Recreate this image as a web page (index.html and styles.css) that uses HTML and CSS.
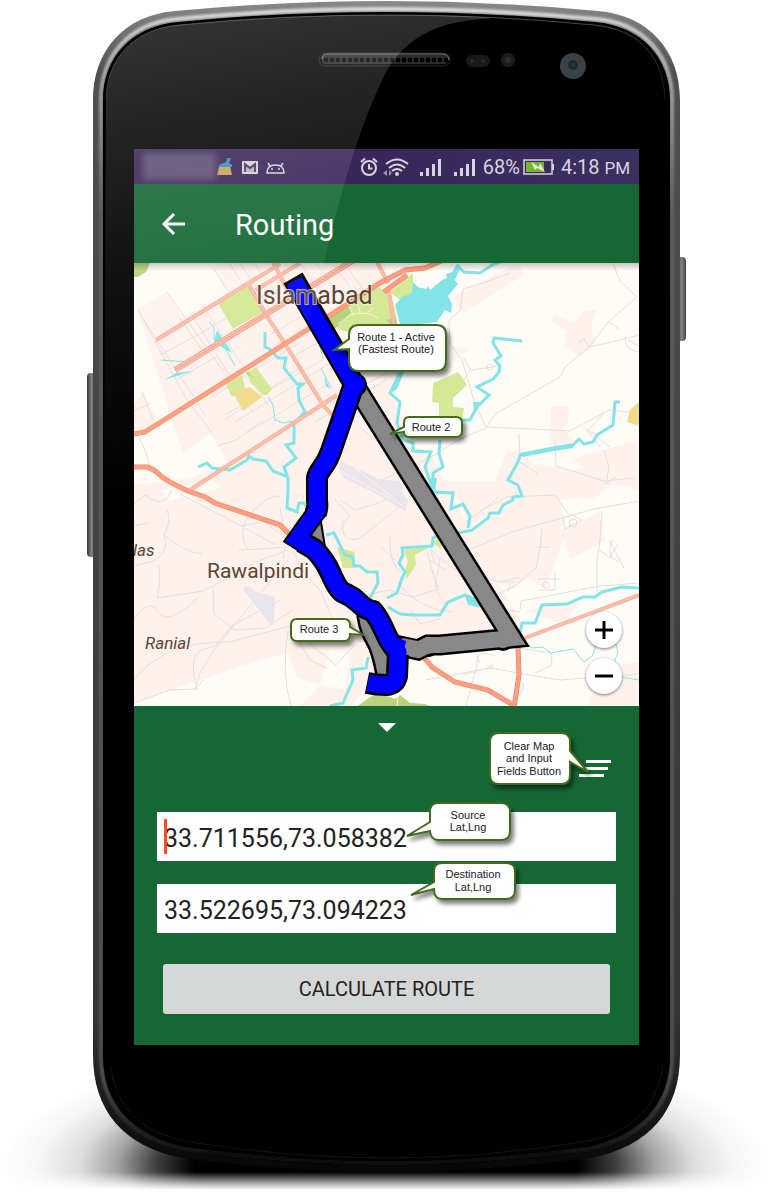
FILE: index.html
```html
<!DOCTYPE html>
<html lang="en">
<head>
<meta charset="utf-8">
<meta name="viewport" content="width=device-width, initial-scale=1">
<title>Routing</title>
<link rel="stylesheet" href="styles.css">
</head>
<body>
<main class="phone">
  <svg class="phone-frame" viewBox="0 0 771 1196" preserveAspectRatio="none" aria-hidden="true">
    <defs>
      <radialGradient id="ground">
        <stop offset="0" stop-color="#000"/><stop offset=".5" stop-color="#000"/>
        <stop offset=".6" stop-color="#000" stop-opacity=".75"/><stop offset=".7" stop-color="#000" stop-opacity=".36"/><stop offset=".8" stop-color="#000" stop-opacity=".13"/>
        <stop offset=".9" stop-color="#000" stop-opacity=".04"/><stop offset="1" stop-color="#000" stop-opacity="0"/>
      </radialGradient>
      <linearGradient id="fade" x1="0" y1="1172" x2="0" y2="1190" gradientUnits="userSpaceOnUse">
        <stop offset="0" stop-color="#fff"/><stop offset=".7" stop-color="#444"/><stop offset="1" stop-color="#000"/>
      </linearGradient>
      <mask id="floor" maskUnits="userSpaceOnUse" x="0" y="1000" width="771" height="196"><rect y="1000" width="771" height="196" fill="url(#fade)"/></mask>
      <linearGradient id="metal" x1="0" y1="0" x2="0" y2="1196" gradientUnits="userSpaceOnUse">
        <stop offset="0" stop-color="#8a8a8a"/><stop offset=".06" stop-color="#505050"/><stop offset=".85" stop-color="#343434"/><stop offset=".95" stop-color="#101010"/><stop offset="1" stop-color="#000"/>
      </linearGradient>
      <linearGradient id="shine" x1="0" y1="0" x2="0" y2="1196" gradientUnits="userSpaceOnUse">
        <stop offset="0" stop-color="#e2e2e2"/><stop offset=".06" stop-color="#aaa"/><stop offset=".18" stop-color="#5c5c5c"/><stop offset=".9" stop-color="#505050"/><stop offset=".96" stop-color="#161616"/><stop offset=".97" stop-color="#080808"/>
      </linearGradient>
      <linearGradient id="lip" x1="0" y1="0" x2="0" y2="110" gradientUnits="userSpaceOnUse">
        <stop offset="0" stop-color="#555"/><stop offset=".5" stop-color="#333"/><stop offset="1" stop-color="#111"/>
      </linearGradient>
      <linearGradient id="key"><stop offset="0" stop-color="#333"/><stop offset=".5" stop-color="#858585"/><stop offset="1" stop-color="#444"/></linearGradient>
      <filter id="soft"><feGaussianBlur stdDeviation="1"/></filter>
      <pattern id="holes" x="323" y="55" width="6" height="10" patternUnits="userSpaceOnUse"><rect width="6" height="10" fill="#2c2c2c"/><circle cx="3" cy="5" r="2.4" fill="#000"/></pattern>
    </defs>
    <ellipse cx="386" cy="1166" rx="384" ry="124" fill="url(#ground)" mask="url(#floor)"/>
    <rect x="87" y="373" width="9" height="184" rx="4" fill="url(#key)"/>
    <rect x="677" y="257" width="9" height="84" rx="4" fill="url(#key)"/>
    <path fill="url(#metal)" d="M93 100C93 50 125 15 175 11Q280 1 386 1T598 11C648 15 680 50 680 100V1055C680 1110 650 1147 590 1158Q480 1172 386 1172T183 1158C123 1147 93 1110 93 1055Z"/>
    <path fill="none" stroke="url(#shine)" stroke-width="4" filter="url(#soft)" d="M101 100C101 55 130 23 177 19Q280 9 386 9T596 19C643 23 672 55 672 100V1055C672 1105 644 1137 588 1149Q480 1163 386 1163T185 1149C129 1137 101 1105 101 1055Z"/>
    <path fill="#000" d="M103 100C103 57 132 26 178 22Q280 12 386 12T595 22C641 26 670 57 670 100V1055C670 1103 642 1135 587 1147Q480 1161 386 1161T186 1147C131 1135 103 1103 103 1055Z"/>
    <path fill="none" stroke="url(#lip)" d="M106 100C106 59 134 29 179 25Q280 15 386 15T594 25C639 29 664 57 665 100"/>
    <path fill="none" stroke="#151515" d="M110 1065C118 1112 142 1133 190 1142Q290 1158 386 1158T583 1142C631 1133 655 1112 663 1065"/>
    <rect x="319" y="53" width="131" height="13" rx="6" fill="#050505" stroke="#222"/>
    <rect x="322" y="55" width="126" height="9" rx="4" fill="url(#holes)"/>
    <path fill="none" stroke="#888" d="M322 59Q322 54 328 54H442Q449 54 449 60"/>
    <rect x="466" y="55" width="24" height="12" rx="6" fill="#191919"/><circle cx="472" cy="61" r="2" fill="#292929"/><circle cx="483" cy="61" r="2" fill="#292929"/>
    <circle cx="508" cy="60" r="7" fill="#1c1c1c"/><circle cx="508" cy="60" r="3" fill="#2b2b2b"/>
    <circle cx="573" cy="66" r="13" fill="#3a4149"/><circle cx="573" cy="65" r="5" fill="#25292d"/><circle cx="573" cy="65" r="2" fill="#2d3237"/>
  </svg>

  <section class="screen">
    <div class="status">
      <span class="redacted"></span>
      <svg class="tray" viewBox="0 0 72 18" aria-hidden="true">
        <path d="M3 9 1 17H16L14 8Z" fill="#c9a657"/><path d="M3 7 10 4 11 0H15L13 5 16 7V9H3Z" fill="#3b8fb8"/>
        <path fill="#d8d0dc" fill-rule="evenodd" d="M27 3H41Q42 3 42 4V15Q42 16 41 16H27Q26 16 26 15V4Q26 3 27 3ZM28 5 34 9 40 5V7L34 11 28 7Z"/><path d="M30 8V14H38V8L34 11Z" fill="#4a3a5e" opacity=".25"/><path d="M29 14V6L34 10 39 6V14" fill="none" stroke="#4a3a5e" stroke-width="2"/>
        <path fill="none" stroke="#d8d0dc" stroke-width="1.500" d="M51 15Q51 7 59.500 7T68 15ZM54 8 52 5M65 8 67 5"/><circle cx="56" cy="11" r="1" fill="#d8d0dc"/><circle cx="63" cy="11" r="1" fill="#d8d0dc"/>
      </svg>
      <svg class="signals" viewBox="0 0 118 20" aria-hidden="true">
        <g fill="none" stroke="#d8d4e0" stroke-width="2"><circle cx="11" cy="11" r="7"/><path d="M11 7V11.500H14.500M3 5 7 1.500M19 5 15 1.500"/>
        <path d="M28 7Q39-2 50 7M31 11Q39 4 47 11M34 14Q39 10 44 14"/></g>
        <circle cx="39" cy="17" r="2" fill="#d8d4e0"/><path d="M25 16 29 13V19ZM31 13 34 16 31 19Z" fill="#9c94ab"/>
        <g fill="#d8d4e0"><path d="M62 15h3v4h-3zM68 11h3v8h-3zM74 7h3v12h-3zM80 2h3v17h-3zM96 15h3v4h-3zM102 11h3v8h-3zM108 7h3v12h-3zM114 2h3v17h-3z"/></g>
      </svg>
      <span class="percent">68%</span>
      <svg class="battery" viewBox="0 0 32 18" aria-hidden="true"><rect x="1" y="2" width="28" height="14" fill="none" stroke="#d8d4e0" stroke-width="1.500"/><path d="M29 6h2v6h-2z" fill="#d8d4e0"/><path d="M3 4h18v10H3z" fill="#73b52c"/><path d="M8 4 16 9 17 5 22 14 14 10 12 12Z" fill="#e4e8e0"/></svg>
      <span class="clock">4:18 <small>PM</small></span>
    </div>

    <header class="bar">
      <button class="icon-button" aria-label="Back"><svg width="24" height="22" viewBox="0 0 24 22"><path d="M12 1 2 11 12 21M2 11H23" fill="none" stroke="#fff" stroke-width="3"/></svg></button>
      <h1>Routing</h1>
    </header>

    <div class="map">
      <svg class="map-canvas" viewBox="134 263 505 443" preserveAspectRatio="xMidYMid slice" role="img" aria-label="Routes between Islamabad and Rawalpindi">
        <defs>
          <filter id="drop" x="-20%" y="-20%" width="150%" height="160%"><feDropShadow dx="3" dy="4" stdDeviation="2" flood-opacity=".5"/></filter>
        </defs>
        <rect x="134" y="263" width="505" height="443" fill="#fffcf7"/>
        <g fill="#fff2ed">
          <path d="M137 310 167 292 182 318 228 292 212 268 222 263H385L392 330 400 372 393 395 410 445 432 455 470 530 520 620 522 640 470 650 395 660 350 706H300L330 675 318 684 297 678 288 652 240 667 134 703V485L190 478 228 462 210 433 183 453Z"/>
          <path d="M134 405 143 392 158 421 134 436ZM452 297 518 263 524 275 463 313ZM553 315 575 322 582 312 598 309 591 325 595 345 580 356 564 345 567 331 553 322ZM551 406H569L568 422 562 428 575 442 550 447ZM507 452 520 450 532 463 590 474 600 495 560 500 565 520 540 570 510 590 470 560 470 530 520 500 495 480ZM430 482 508 481 522 495 500 510 470 525 460 500ZM600 512 605 540 570 560 560 530ZM525 610 580 600 565 625ZM588 700 615 665 639 662V706H590ZM450 345 468 350 452 363ZM572 458 639 440V490L600 480Z"/>
          <path d="M545 480 605 460 620 480 590 500ZM495 565 540 525 565 535 545 590 530 578Z"/>
        </g>
        <path fill="#fffcf7" d="M160 490 212 480 220 488 170 501ZM330 650 350 655 345 690 320 685Z"/>
        <g fill="none" stroke="#e4dfdc" stroke-width="1">
          <path d="M144 320 205 415M167 292 188 322 248 405M153 343 178 330 245 283M160 355 196 336 268 293M176 380 216 357M180 318 202 350M190 312 253 413M202 304 268 405M211 398 302 341M225 420 303 366M235 422 335 360M246 433 328 384M217 446 236 440 263 420M213 268 227 290M230 264 240 280M240 263 270 309M254 263 279 297M301 263 326 303M316 263 339 294M332 263 350 287M345 264 370 299M270 335 300 317M276 345 314 323M295 355 325 339M330 404 390 371M315 422 386 380M338 303 380 325M138 310 187 400 212 433M142 392 153 420M134 411 151 403M139 437Q148 455 149 465M225 415 340 350"/>
          <path d="M134 504 145 495Q164 510 172 490M134 526 147 523M167 510Q172 520 164 535Q170 553 153 561L134 566M164 535Q184 552 202 554M157 598Q162 574 158 565M157 598 203 591 215 585 253 563 288 550M213 587 214 614 235 630 265 628 293 610M134 619Q150 597 158 612T199 597M203 680 195 690 200 673 214 650 263 590 288 560M197 689Q190 664 196 655L202 650 215 646 233 625 280 600M134 680Q165 640 230 642L290 626M238 550 260 549 286 547M240 526 273 520 293 535M262 520 288 540 305 575 320 590 335 625M280 508 286 540 283 558M288 530 308 510M248 550Q235 530 252 512T280 496M180 494 228 519 276 545M288 630Q281 675 291 706M294 634 310 660 327 668M306 641 336 665 359 640M340 500 355 510 375 504 397 495M343 520Q340 545 360 538L409 499M340 530 350 515 335 500M300 495 310 500 328 467 350 445M360 427 388 450M330 435 323 458M337 465Q350 485 392 489M390 536Q388 565 404 575M380 547 396 561M400 585Q420 610 453 612M410 609 420 624 440 619M433 571 438 593 446 606M435 562 430 550M445 570 430 560M360 596 390 590 412 597 439 589"/>
          <path d="M613 263 620 281 637 297 609 321 589 347 565 367 560 377 495 414 486 428 460 439 431 457 380 481M486 427 475 404 462 360 450 344 449 320 460 311 463 289 480 284 510 273M487 427 550 430 570 431 609 410 639 413M589 347 620 340 639 335M578 343 584 339 589 347M609 322 619 329M625 337Q624 350 639 352M628 340 639 346M463 357 471 370 498 366 500 372M471 370 462 382M605 412 588 430 610 447M585 428 600 447M519 434 520 462 538 474M555 440 556 466 604 481 634 478M604 450 609 467 606 484M598 478 606 484 616 477M134 703 170 690 197 689"/>
          <path d="M639 501 594 509 512 532 471 549 440 545M572 515 582 520 565 529 563 518 572 515M570 516 555 495 508 497 480 511M542 529 540 548 536 568 515 586 480 602M537 547 550 547M538 579H559M539 590H555V571M602 511 600 540 597 560V592M599 550 610 558 617 545M609 540 624 568M613 540Q608 545 611 557L619 562M431 549 440 560 435 587M427 551 433 574 439 588M440 558 470 580 487 606 520 612M470 575 500 582 520 577M500 582H515M510 583 508 592M465 522 480 512 499 497M520 610 521 601 600 586 639 583M407 638 390 655M478 655 476 670 470 690 466 706M425 680 490 668 530 675 560 680 639 674M463 675 492 667M518 648 551 653 552 665 535 673M522 681Q526 688 519 696M480 663Q470 650 493 655"/>
          <circle cx="490" cy="367" r="3"/><circle cx="573" cy="523" r="4"/><circle cx="546" cy="585" r="3"/><circle cx="491" cy="667" r="2"/>
        </g>
        <g fill="#eae5ed"><path d="M335 462 345 463 402 490 408 502 405 511 376 494 344 478ZM370 478 400 481 404 490ZM243 587 250 586 254 591 275 597 274 622 270 624 245 592Z"/></g>
        <g stroke="#fff2ed" fill="none"><path d="M342 472 402 505M352 466 396 500M365 490 378 478"/></g>
        <g fill="#d4e896">
          <path d="M218 303 247 284 263 312 233 329ZM328 317 352 299 375 286 385 290 394 305 398 325 380 338 340 330ZM390 292 413 273V293L400 300ZM225 383 242 375 245 387 232 397ZM247 373 256 367 272 389 267 395H263L250 382ZM433 383 458 372 467 385 453 398V407L464 408 462 420 439 418V403L432 402ZM337 547 355 552 353 568H343ZM404 550 430 547 415 555 416 565 407 579 405 570 408 561ZM433 543 442 531 441 549Z"/>
        </g>
        <path fill="#b8d27d" d="M134 263H150L146 272 138 277H134ZM328 317 348 305 352 312 334 330ZM385 320 396 318 397 328ZM358 706 370 697 378 693 395 699 400 695 410 703 425 704 430 706ZM246 374 248 371 253 377Z"/>
        <g fill="none" stroke="#f5f6e4" stroke-width="1"><path d="M338 324 350 315 358 313 370 314 378 318M360 312 358 305M366 314 373 308M399 690 397 706M353 314 345 300"/></g>
        <path fill="#f2da8c" d="M232 391 250 387 262 397 243 411ZM627 422 630 410 639 402V426Z"/>
        <g fill="none" stroke="#82e4e6" stroke-width="3">
          <path d="M265 332V347L270 349 278 358H286L284 368 297 384H303L298 388 299 400 305 412 294 423V443L286 445 296 458 284 467 288 478V490L287 508 297 512 299 503H304L307 508M198 467 207 463 212 468 230 470 247 460 249 456 253 459 266 461 273 471 288 477"/>
          <path d="M457 265 464 272 480 273 492 265 502 261M522 341 494 338 493 343 501 356 495 360 500 366 499 372 493 379 477 387 489 395 477 407 470 420H458M400 373 390 393 400 402 397 423 403 440 413 443V451L431 452 425 467 433 490V492L453 493 451 509 463 504 470 516 468 528M440 440 439 453 443 467 433 473V490"/>
          <path d="M620 402H615L613 425 597 435 593 442 584 444 579 439 573 445 553 449 520 455 518 462 508 480 518 485 522 496 513 497V500L503 505 499 513H490L488 518 472 530 458 533M447 531 433 538 432 546 402 548 403 555 399 563 405 572 402 578 397 593 387 598M388 607 400 614 413 615H440L448 602 465 595 497 610"/>
          <path d="M520 633 522 623H535L542 605 567 604 583 597H595L602 592 622 587 639 588M326 535 334 533 345 555 353 557 354 566H360L367 572H377L378 583 370 598M368 657 366 668 352 670 353 680 343 703 330 706"/>
        </g>
        <g fill="none" stroke="#82e4e6"><path d="M161 360 190 362M209 321 214 328V340M217 333 235 366M268 397 273 405 275 420 283 423 293 421M318 340 323 358M321 368 331 388M525 643 532 648 543 647 551 653 573 649 584 662 593 655 596 645M615 642 618 652 615 660 621 677 639 680"/></g>
        <path fill="#82e4e6" d="M395 305 402 297 412 293 413 282 418 287 426 289 428 286 430 290 442 280 447 278 446 274 452 272 457 264 460 268 455 280 458 284 448 296 452 304 451 313 445 310 437 322 420 324H400ZM217 330 225 342 232 353 223 348 214 341ZM164 380 176 373 193 371ZM398 372 404 372 397 389 390 393ZM473 402 480 402 474 410ZM520 453 555 446 574 443 573 448 554 451 522 457ZM465 595 475 599 490 604 497 611 468 605ZM430 478 437 478 435 493ZM324 376 330 389 326 386Z"/>
        <g fill="none" stroke="#f6a591" stroke-width="4"><path d="M156 340 280 264M272 260 287 289M248 283 265 313 287 347 323 405 332 415M376 260 388 283M190 490 337 395M525 638 639 595M389 291 394 325M300 263 256 290"/></g>
        <g fill="none" stroke="#fdbcaa" stroke-width="3"><path d="M156 340 280 264M272 260 287 289M248 283 265 313 287 347 323 405 332 415M376 260 388 283M190 490 337 395M525 638 639 595M389 291 394 325M300 263 256 290"/></g>
        <path fill="none" stroke="#f6a591" stroke-width="6" d="M175 370 354 260"/><path fill="none" stroke="#fdbcaa" stroke-width="4" d="M175 370 354 260"/><path stroke="#f49c86" d="M175 370 354 260"/>
        <g fill="none" stroke="#ed815f" stroke-width="5"><path d="M134 434 145 432 307 330 380 283 405 270 425 268 441 261M134 467H147Q154 469 160 475T188 491L205 497 215 503 280 525 290 535M422 655 432 667 455 682 488 690 515 706M518 646 519 675 514 708M384 292 407 275"/></g>
        <g fill="none" stroke="#ff9e80" stroke-width="4"><path d="M134 434 145 432 307 330 380 283 405 270 425 268 441 261M134 467H147Q154 469 160 475T188 491L205 497 215 503 280 525 290 535M422 655 432 667 455 682 488 690 515 706M518 646 519 675 514 708M384 292 407 275"/></g>

        <g fill="none" stroke-linejoin="miter">
          <path stroke="#000" stroke-width="21" d="M354 384 512 638 440 645 428 645 418 650 395 645"/><circle cx="503" cy="641" r="10" fill="#000"/><circle cx="428" cy="646" r="11" fill="#000"/><circle cx="418" cy="649" r="10" fill="#000"/>
          <path stroke="#888" stroke-width="16" d="M354 384 512 638 440 645 428 645 418 650 395 645"/><circle cx="503" cy="640" r="8" fill="#888"/><circle cx="428" cy="646" r="8" fill="#888"/><circle cx="418" cy="649" r="8" fill="#888"/>
          <path stroke="#000" stroke-width="22" stroke-linejoin="round" d="M367 608Q367 625 375 638T388 685"/>
          <path stroke="#888" stroke-width="17" stroke-linejoin="round" d="M367 608Q367 625 375 638T388 685"/>
          <path fill="#888" stroke="#000" stroke-width="2" d="M321 522 325 547 316 546 306 537Z"/>
          <path stroke="#000" stroke-width="22" d="M293 278 354 384"/>
          <path stroke="#000" stroke-width="22" stroke-linejoin="round" d="M354 384 331 451Q328 460 322 468T317 480V500Q318 508 316 513"/>
          <path stroke="#000" stroke-width="20" d="M317 511 297 539 313 549"/>
          <path stroke="#000" stroke-width="22" stroke-linejoin="round" d="M302 542 314 549Q325 560 331 574T342 592Q352 596 359 603T373 611Q380 620 385 632T398 652L397 676Q395 685 386 685T367 683"/>
          <circle cx="355" cy="385" r="12" fill="#000"/><circle cx="316" cy="511" r="11" fill="#000"/>
          <path stroke="#888" stroke-width="16" d="M418 649 402 646"/>
          <path stroke="#00f" stroke-width="17" d="M294 281 354 384"/>
          <path stroke="#00f" stroke-width="17" stroke-linejoin="round" d="M354 384 331 451Q328 460 322 468T317 480V500Q318 508 316 513"/>
          <circle cx="316" cy="511" r="8" fill="#00f"/>
          <path stroke="#00f" stroke-width="16" d="M317 511 297 539 313 549"/>
          <path stroke="#00f" stroke-width="17" stroke-linejoin="round" d="M302 542 314 549Q325 560 331 574T342 592Q352 596 359 603T373 611Q380 620 385 632T398 652L397 676Q395 685 386 685T368 683"/>
          <circle cx="356" cy="384" r="9" fill="#00f"/><path fill="#00f" d="M388 634 406 641 403 655 395 656Z"/>
        </g>
        <g class="places">
          <text x="256" y="304" class="city">Islamabad</text>
          <text x="207" y="578" class="town">Rawalpindi</text>
          <text x="145" y="649" class="village">Ranial</text>
          <text x="133" y="556" class="village">las</text>
        </g>
        <g class="note">
          <path d="M359 325H436Q446 325 446 335V361Q446 371 436 371H359Q349 371 349 361V349L334 350 349 339V335Q349 325 359 325Z"/>
          <text x="396" y="341">Route 1 - Active</text><text x="396" y="353">(Fastest Route)</text>
          <path d="M409 417H456Q462 417 462 423V431Q462 437 456 437H409Q404 437 404 432L390 434 404 427V423Q404 417 409 417Z"/>
          <text x="431" y="431">Route 2</text>
          <path d="M297 619H344Q350 619 350 625V627L364 635 350 634Q350 641 344 641H297Q291 641 291 635V625Q291 619 297 619Z"/>
          <text x="319" y="633">Route 3</text>
        </g>
      </svg>
      <div class="zoom">
        <button aria-label="Zoom in"><svg width="20" height="20" viewBox="0 0 20 20"><path d="M10 1V19M1 10H19" stroke="#000" stroke-width="3"/></svg></button>
        <button aria-label="Zoom out"><svg width="20" height="20" viewBox="0 0 20 20"><path d="M1 10H19" stroke="#000" stroke-width="3"/></svg></button>
      </div>
    </div>

    <form class="panel">
      <button type="button" class="collapse" aria-label="Collapse"><svg width="18" height="9" viewBox="0 0 18 9"><path d="M0 0H18L9 9Z" fill="#fff"/></svg></button>
      <button type="button" class="clear" aria-label="Clear map and input fields"><svg width="32" height="18" viewBox="0 0 32 18"><path d="M7 0H32V3H7ZM4 7H29V10H4ZM0 14H25V17H0Z" fill="#fff"/></svg></button>
      <div class="fields">
        <div class="field"><input type="text" aria-label="Source Lat,Lng" value="33.711556,73.058382"><span class="caret"></span></div>
        <div class="field"><input type="text" aria-label="Destination Lat,Lng" value="33.522695,73.094223"></div>
      </div>
      <button type="button" class="calculate">CALCULATE ROUTE</button>
      <svg class="notes" viewBox="134 706 505 339" aria-hidden="true">
        <g class="note">
          <path d="M499 733H561Q570 733 570 742V751L588 772 570 762V775Q570 784 561 784H499Q490 784 490 775V742Q490 733 499 733Z"/>
          <text x="529" y="750">Clear Map</text><text x="529" y="762">and Input</text><text x="529" y="775">Fields Button</text>
          <path d="M438 803H501Q510 803 510 812V831Q510 840 501 840H438Q431 840 430 831L407 836 430 822V812Q430 803 438 803Z"/>
          <text x="468" y="819">Source</text><text x="468" y="831">Lat,Lng</text>
          <path d="M442 863H506Q515 863 515 871V890Q515 899 506 899H442Q434 899 434 889L411 895 434 882V871Q434 863 442 863Z"/>
          <text x="473" y="878">Destination</text><text x="473" y="891">Lat,Lng</text>
        </g>
      </svg>
    </form>
  </section>

  <svg class="glare" viewBox="0 0 771 1196" preserveAspectRatio="none" aria-hidden="true">
    <defs><linearGradient id="glass" x1="150" y1="20" x2="230" y2="490" gradientUnits="userSpaceOnUse">
      <stop offset="0" stop-color="#fff" stop-opacity=".2"/><stop offset=".5" stop-color="#fff" stop-opacity=".07"/><stop offset="1" stop-color="#fff" stop-opacity="0"/>
    </linearGradient></defs>
    <path fill="url(#glass)" d="M106 100C106 59 134 29 179 25Q280 15 386 15T490 19Q415 20 386 72 352 140 324 263 290 400 260 500H104Z"/>
  </svg>
</main>
</body>
</html>
```
FILE: styles.css
```css
* { box-sizing: border-box; }
body { margin: 0; background: #fff; font-family: Roboto, "Liberation Sans", sans-serif; }
button { border: 0; padding: 0; background: none; font: inherit; cursor: pointer; }
svg { display: block; }

.phone { position: relative; padding: 149px 132px 151px 134px; }
.phone-frame, .glare { position: absolute; inset: 0; width: 100%; height: 100%; }
.glare { pointer-events: none; }
.screen { position: relative; overflow: hidden; background: #156834; }

.status { display: flex; align-items: center; height: 35px; padding: 0 9px; background: linear-gradient(90deg, #3b2556, #39265a 45%, #3a3060); color: #d8d4e0; font-size: 20px; white-space: nowrap; }
.redacted { width: 73px; height: 27px; background: #6b6080; filter: blur(3px); opacity: .7; }
.tray { width: 72px; height: 18px; }
.signals { width: 118px; height: 20px; margin-left: auto; }
.percent { margin-left: 7px; }
.battery { width: 32px; height: 18px; margin: 0 6px 0 3px; }
.clock small { font-size: 17px; }

.bar { display: flex; align-items: center; gap: 49px; height: 79px; padding: 0 28px; color: #fff; }
.bar h1 { margin: 0; padding-top: 2px; font-size: 29px; font-weight: 400; }

.map { position: relative; }
.map::before { content: ""; position: absolute; inset: 0 0 auto; height: 8px; background: linear-gradient(rgba(0, 0, 0, .22), transparent); }
.map-canvas { width: 100%; height: 443px; }
.places text { fill: #5c4435; stroke: #fff4ee; stroke-width: 2px; stroke-opacity: .7; paint-order: stroke; }
.places .city { font-size: 25px; }
.places .town { font-size: 21px; }
.places .village { font-size: 17px; font-style: italic; }
.note path { fill: #fff; stroke: #3f6c1c; stroke-width: 2px; filter: url(#drop); }
.note text { font: 11px "Liberation Sans", Arial, sans-serif; fill: #20202a; text-anchor: middle; }

.zoom { position: absolute; right: 17px; bottom: 12px; display: grid; gap: 10px; }
.zoom button { display: grid; place-items: center; width: 36px; height: 36px; border-radius: 50%; background: #fff; box-shadow: 0 1px 3px rgba(0, 0, 0, .5); }

.panel { position: relative; display: flex; flex-direction: column; padding: 17px 23px 31px; }
.collapse { align-self: center; }
.clear { align-self: flex-end; margin: 28px 5px 0 0; }
.fields { display: grid; gap: 23px; margin-top: 34px; }
.field { position: relative; }
.field input { display: block; width: 100%; height: 49px; padding: 4px 7px 0; border: 0; border-radius: 0; background: #fff; color: #222; font: 25px Roboto, sans-serif; }
.caret { position: absolute; left: 7px; top: 7px; width: 3px; height: 35px; background: #ff4a24; }
.calculate { height: 50px; margin: 31px 6px 0; border-radius: 3px; background: #d6d8d7; color: #222; font-size: 20px; }
.notes { position: absolute; inset: 0; width: 100%; height: 100%; pointer-events: none; }
```
